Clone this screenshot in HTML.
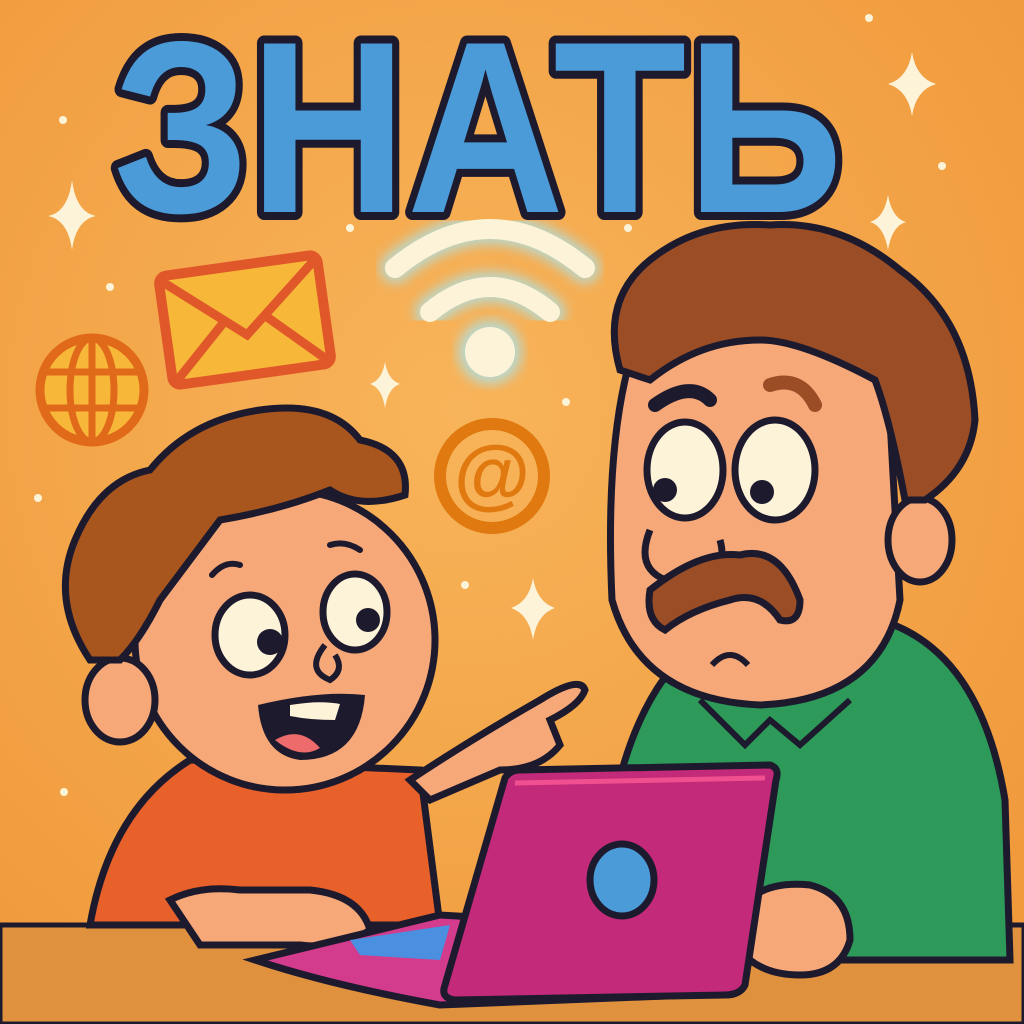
<!DOCTYPE html>
<html><head><meta charset="utf-8"><style>html,body{margin:0;padding:0;width:1024px;height:1024px;overflow:hidden;background:#F3A445}</style></head>
<body>
<svg width="1024" height="1024" viewBox="0 0 1024 1024" xmlns="http://www.w3.org/2000/svg">
<defs>
<radialGradient id="bg" cx="0.45" cy="0.4" r="0.7"><stop offset="0" stop-color="#F8B45A"/><stop offset="1" stop-color="#F09A3C"/></radialGradient>
<filter id="glow"><feGaussianBlur stdDeviation="6"/></filter>
</defs>
<rect width="1024" height="1024" fill="url(#bg)"/>
<rect x="0" y="925" width="1024" height="99" fill="#E0913E" stroke="#1E1A2E" stroke-width="5"/>
<text x="478" y="212" text-anchor="middle" font-family="Liberation Sans, DejaVu Sans, sans-serif" font-weight="bold" font-size="245" textLength="730" lengthAdjust="spacingAndGlyphs" fill="#4A9BD8" stroke="#1E1A2E" stroke-width="16" stroke-linejoin="round" paint-order="stroke">ЗНАТЬ</text>
<g fill="#FDF3D8">
<path d="M72 180 Q76 212 96 216 Q76 220 72 250 Q68 220 48 216 Q68 212 72 180Z"/>
<path d="M912 52 Q916 78 936 84 Q916 90 912 116 Q908 90 888 84 Q908 78 912 52Z"/>
<path d="M888 195 Q892 218 906 222 Q892 226 888 250 Q884 226 870 222 Q884 218 888 195Z"/>
<path d="M385 362 Q388 380 400 384 Q388 388 385 408 Q382 388 370 384 Q382 380 385 362Z"/>
<path d="M533 578 Q537 602 555 608 Q537 614 533 640 Q529 614 511 608 Q529 602 533 578Z"/>
<circle cx="63" cy="120" r="4"/><circle cx="110" cy="287" r="4"/><circle cx="350" cy="228" r="4"/><circle cx="628" cy="228" r="4"/><circle cx="942" cy="166" r="4"/><circle cx="869" cy="18" r="4"/><circle cx="566" cy="402" r="4"/><circle cx="38" cy="498" r="4"/><circle cx="465" cy="585" r="4"/><circle cx="64" cy="792" r="4"/>
</g>
<g stroke="#A8E4F0" stroke-width="30" fill="none" stroke-linecap="round" filter="url(#glow)" opacity="0.8">
<path d="M395 268 Q490 190 585 268"/><path d="M430 312 Q490 262 550 312"/></g>
<circle cx="490" cy="352" r="32" fill="#A8E4F0" filter="url(#glow)" opacity="0.8"/>
<g stroke="#FDF3D8" stroke-width="20" fill="none" stroke-linecap="round">
<path d="M395 268 Q490 190 585 268"/><path d="M430 312 Q490 262 550 312"/></g>
<circle cx="490" cy="352" r="25" fill="#FDF3D8"/>
<g transform="rotate(-8 245 320)"><rect x="165" y="265" width="160" height="110" rx="8" fill="#F7B83A" stroke="#E0582A" stroke-width="10"/>
<path d="M170 272 L245 335 L320 272 M170 370 L225 318 M320 370 L265 318" stroke="#E0582A" stroke-width="9" fill="none"/></g>
<circle cx="92" cy="390" r="52" fill="#F7B83A" stroke="#E06A1A" stroke-width="9"/>
<g stroke="#E06A1A" stroke-width="7" fill="none"><ellipse cx="92" cy="390" rx="22" ry="52"/><path d="M92 338 V442 M42 372 H142 M42 408 H142"/></g>
<circle cx="492" cy="476" r="52" fill="none" stroke="#E07A10" stroke-width="12"/>
<text x="492" y="500" text-anchor="middle" font-family="Liberation Sans, sans-serif" font-weight="bold" font-size="78" fill="#E07A10">@</text>
<path d="M600 960 Q600 720 700 640 L880 620 Q980 650 1005 800 L1010 960Z" fill="#2E9A5A" stroke="#1E1A2E" stroke-width="7"/>
<path d="M700 700 L745 745 L770 720 L800 745 L850 700" fill="#2E9A5A" stroke="#1E1A2E" stroke-width="6"/>
<path d="M630 360 Q640 290 760 285 Q870 290 890 420 L900 600 Q880 700 760 705 Q640 700 612 600 Q605 450 630 360Z" fill="#F6A878" stroke="#1E1A2E" stroke-width="7"/>
<ellipse cx="920" cy="540" rx="32" ry="42" fill="#F6A878" stroke="#1E1A2E" stroke-width="7"/>
<path d="M620 370 Q600 300 650 260 Q700 220 770 225 Q840 220 900 270 Q970 320 975 420 Q970 470 925 500 L905 500 Q890 420 875 380 Q800 340 760 340 Q700 340 650 380Z" fill="#9B4E25" stroke="#1E1A2E" stroke-width="7"/>
<ellipse cx="685" cy="470" rx="38" ry="48" fill="#FDF3D8" stroke="#1E1A2E" stroke-width="7"/>
<ellipse cx="775" cy="470" rx="40" ry="50" fill="#FDF3D8" stroke="#1E1A2E" stroke-width="7"/>
<circle cx="665" cy="490" r="12" fill="#1E1A2E"/><circle cx="762" cy="492" r="12" fill="#1E1A2E"/>
<path d="M655 405 Q690 380 710 400" stroke="#1E1A2E" stroke-width="14" fill="none" stroke-linecap="round"/>
<path d="M770 385 Q800 375 815 405" stroke="#9B4E25" stroke-width="14" fill="none" stroke-linecap="round"/>
<path d="M650 530 Q630 580 690 585 Q730 575 720 540" fill="#F6A878" stroke="#1E1A2E" stroke-width="7"/>
<path d="M650 590 Q700 550 740 555 Q780 545 800 600 Q800 625 780 620 Q760 590 730 600 Q690 610 665 630 Q645 620 650 590Z" fill="#9B4E25" stroke="#1E1A2E" stroke-width="7"/>
<path d="M712 665 Q730 645 748 665" stroke="#1E1A2E" stroke-width="6" fill="none"/>
<path d="M90 925 Q110 810 190 760 L420 770 L440 925Z" fill="#E8602A" stroke="#1E1A2E" stroke-width="7"/>
<path d="M410 780 Q470 740 540 700 Q580 675 585 690 Q580 705 550 720 L560 745 Q540 770 500 770 L430 800Z" fill="#F6A878" stroke="#1E1A2E" stroke-width="7"/>
<ellipse cx="285" cy="640" rx="150" ry="150" fill="#F6A878" stroke="#1E1A2E" stroke-width="7"/>
<ellipse cx="120" cy="700" rx="35" ry="42" fill="#F6A878" stroke="#1E1A2E" stroke-width="7"/>
<path d="M90 660 Q50 600 75 540 Q100 480 150 470 Q190 420 260 410 Q330 400 360 440 Q410 450 405 495 Q360 510 330 490 Q280 510 220 520 Q190 560 160 600 Q140 640 120 660Z" fill="#A8561E" stroke="#1E1A2E" stroke-width="7"/>
<ellipse cx="250" cy="635" rx="35" ry="40" fill="#FDF3D8" stroke="#1E1A2E" stroke-width="7"/>
<ellipse cx="355" cy="612" rx="32" ry="38" fill="#FDF3D8" stroke="#1E1A2E" stroke-width="7"/>
<circle cx="270" cy="642" r="13" fill="#1E1A2E"/><circle cx="368" cy="620" r="12" fill="#1E1A2E"/>
<path d="M212 575 Q225 560 240 565 M330 545 Q345 540 360 550" stroke="#1E1A2E" stroke-width="6" fill="none" stroke-linecap="round"/>
<path d="M325 645 Q305 670 330 680 Q345 670 335 655" fill="#F6A878" stroke="#1E1A2E" stroke-width="6"/>
<path d="M258 705 Q320 690 365 695 Q360 760 300 760 Q262 755 258 705Z" fill="#1E1A2E"/>
<path d="M290 705 Q320 700 340 704 L335 720 Q310 720 290 716Z" fill="#FDF3D8"/>
<path d="M275 740 Q300 725 320 748 Q300 760 275 740Z" fill="#EE6B6B"/>
<path d="M170 900 Q200 885 240 890 L310 890 Q360 895 370 930 Q340 950 300 945 L200 945Z" fill="#F6A878" stroke="#1E1A2E" stroke-width="7"/>
<path d="M740 910 Q760 880 810 885 Q850 895 850 940 Q840 975 800 975 Q760 975 740 950Z" fill="#F6A878" stroke="#1E1A2E" stroke-width="7"/>
<path d="M255 960 L440 915 L700 930 L690 995 L440 1005 Q330 985 255 960Z" fill="#D33C8C" stroke="#1E1A2E" stroke-width="7"/>
<path d="M350 940 L450 925 L440 960 L360 955Z" fill="#4A8FE0"/>
<path d="M505 778 Q510 770 520 770 L770 765 Q780 768 776 780 L745 985 Q740 995 725 995 L455 1000 Q440 998 445 985Z" fill="#C32A7A" stroke="#1E1A2E" stroke-width="7"/>
<path d="M515 783 L765 778" stroke="#F0508F" stroke-width="5"/>
<ellipse cx="622" cy="880" rx="32" ry="36" fill="#4A9BD8" stroke="#1E1A2E" stroke-width="7"/>
</svg>
</body></html>
